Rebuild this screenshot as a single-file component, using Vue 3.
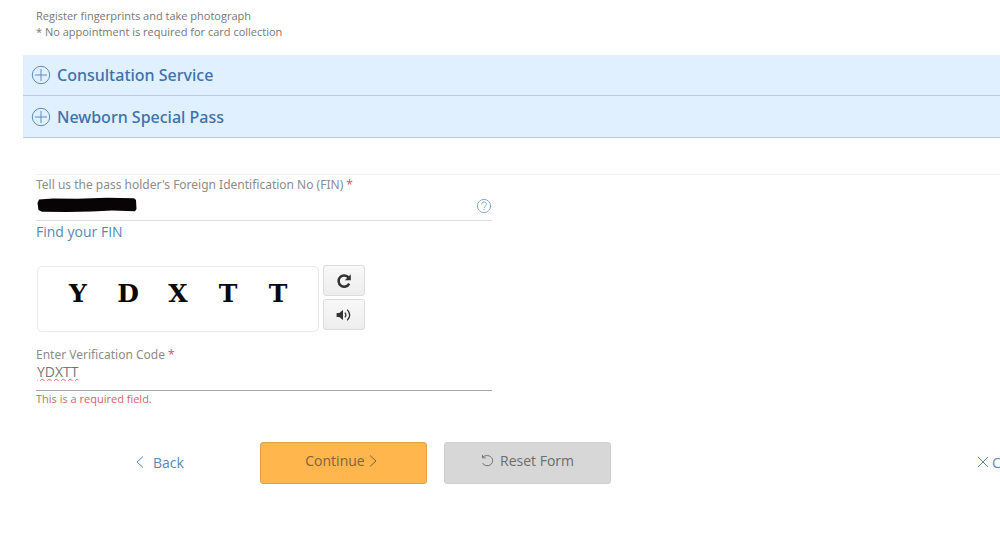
<script setup>
import { ref } from 'vue'

const services = ['Consultation Service', 'Newborn Special Pass']
const captcha = ['Y', 'D', 'X', 'T', 'T']
const fin = ref('')
const code = ref('YDXTT')
</script>

<template>
  <main class="page">
    <p class="notes">
      Register fingerprints and take photograph<br />
      * No appointment is required for card collection
    </p>

    <section class="services">
      <button v-for="name in services" :key="name" type="button" class="service">
        <svg class="plus" viewBox="0 0 20 20" aria-hidden="true">
          <circle cx="10" cy="10" r="8.7" />
          <path d="M10 4v12M4 10h12" />
        </svg>
        {{ name }}
      </button>
    </section>

    <form class="form" @submit.prevent>
      <div class="fields">
        <label class="label" for="fin">Tell us the pass holder's Foreign Identification No (FIN) <span class="star">*</span></label>
        <div class="control light">
          <input id="fin" v-model="fin" class="input" type="text" />
          <svg class="mask" viewBox="0 0 100 16" aria-hidden="true">
            <path d="M2 2.5 16 1.5 40 1.8 70 .8 97 1.2 99 3 99.5 12 98 14.2 75 13.6 55 14.5 30 15 5 14.8 1.5 13 .5 6Z" />
          </svg>
          <button type="button" class="help" aria-label="Help">
            <svg viewBox="0 0 16 16" aria-hidden="true">
              <circle cx="8" cy="8" r="6.6" />
              <path d="M5.6 6.4c0-1.5 1-2.4 2.4-2.4s2.5.9 2.5 2.2c0 1.7-2.3 1.8-2.3 3.6M8.2 11v1.2" />
            </svg>
          </button>
        </div>
        <a class="find" href="#">Find your FIN</a>

        <div class="captcha">
          <div class="challenge">
            <span v-for="(letter, i) in captcha" :key="i">{{ letter }}</span>
          </div>
          <div class="tools">
            <button type="button" class="tool" aria-label="New code">
              <svg viewBox="0 0 16 16" aria-hidden="true">
                <path class="arc" d="M12.6 4.6A5.6 5.6 0 1 0 13.2 10.6" />
                <path class="solid" d="M14.8 1.2v6H8.8Z" />
              </svg>
            </button>
            <button type="button" class="tool" aria-label="Play audio code">
              <svg viewBox="0 0 16 16" aria-hidden="true">
                <path class="solid" d="M.6 6h2.6L7 3v10L3.200 10H.6Z" />
                <path class="wave" d="M8.900 5.700q1.900 2.300 0 4.600M11.200 2.600q5 5.400 0 10.800" />
              </svg>
            </button>
          </div>
        </div>

        <label class="label" for="code">Enter Verification Code <span class="star">*</span></label>
        <div class="control dark">
          <input id="code" v-model="code" class="input flagged" type="text" />
        </div>
        <p class="error">This is a required field.</p>
      </div>

      <div class="actions">
        <a class="link back" href="#">
          <svg viewBox="0 0 10 14" aria-hidden="true"><path d="M8 1.500 2 7l6 5.500" /></svg>
          Back
        </a>
        <button type="submit" class="button continue">
          Continue
          <svg viewBox="0 0 10 14" aria-hidden="true"><path d="M2 1.500 8 7l-6 5.500" /></svg>
        </button>
        <button type="button" class="button reset">
          <svg viewBox="0 0 14 14" aria-hidden="true">
            <path d="M2 3.200C6 .2 12.500 1.800 12.500 7.200c0 6-8.500 7.200-10.700 2.600M1.600 1v3.200H5" />
          </svg>
          Reset Form
        </button>
        <a class="link cancel" href="#">
          <svg viewBox="0 0 12 12" aria-hidden="true"><path d="M1 1l10 10M11 1 1 11" /></svg>
          Cancel
        </a>
      </div>
    </form>
  </main>
</template>

<style>
body {
  margin: 0;
  background: #fff;
  overflow: hidden;
}
</style>

<style scoped>
.page {
  box-sizing: border-box;
  padding: 8px 0 64px 23px;
  font-family: "Open Sans", "Noto Sans", sans-serif;
  color: #777;
  overflow: hidden;
}
button, input {
  font: inherit;
  color: inherit;
}
button {
  cursor: pointer;
}
svg {
  flex: none;
  fill: none;
  stroke: currentColor;
}
.notes {
  margin: 0;
  padding: 0 13px;
  font-size: 11px;
  line-height: 16px;
}
.services {
  margin-top: 15px;
}
.service {
  display: flex;
  align-items: center;
  gap: 6px;
  box-sizing: border-box;
  width: 100%;
  height: 41px;
  padding: 0 8px;
  border: 0;
  border-bottom: 1px solid #bccddd;
  background: #e0f0fe;
  color: #3d72aa;
  font-family: "Noto Sans", sans-serif;
  font-size: 16px;
  font-weight: 500;
  text-align: left;
}
.service:last-child {
  height: 42px;
}
.plus {
  width: 20px;
  height: 20px;
  stroke: #5e8cbb;
}
.form {
  margin: 36px 0 0 13px;
  border-top: 1px solid #f0f0f0;
}
.fields {
  max-width: 456px;
}
.label {
  display: block;
  font-family: "Noto Sans", sans-serif;
  font-size: 12px;
  line-height: 20px;
  color: #8c8c8c;
}
.star {
  color: #e0575b;
}
.control {
  position: relative;
  display: flex;
  align-items: center;
  box-sizing: border-box;
  height: 26px;
  padding-bottom: 4px;
  border-bottom: 1px solid #dcdfe8;
}
.control.dark {
  border-color: #a8a8a8;
}
.input {
  flex: 1;
  min-width: 0;
  height: 18px;
  padding: 0 1px;
  margin-bottom: 8px;
  border: 0;
  outline: 0;
  background: transparent;
  font-size: 14px;
  line-height: 18px;
}
.flagged {
  text-decoration: underline wavy #ee6666 1px;
}
.mask {
  position: absolute;
  left: 1px;
  top: 2px;
  width: 100px;
  height: 16px;
  fill: #080405;
  stroke: none;
}
.help {
  display: flex;
  padding: 0;
  border: 0;
  background: none;
  color: #88a9ca;
}
.help svg {
  width: 16px;
  height: 16px;
}
.find {
  display: block;
  width: max-content;
  font-size: 14px;
  line-height: 22px;
  color: #5a88b5;
  text-decoration: none;
}
.captcha {
  display: flex;
  gap: 4px;
  margin: 22px 0 13px 1px;
}
.challenge {
  box-sizing: border-box;
  display: flex;
  justify-content: center;
  width: 282px;
  height: 66px;
  margin-top: 1px;
  padding-top: 13px;
  border: 1px solid #e9e9e9;
  border-radius: 5px;
  font: bold 25px/28px "DejaVu Serif", serif;
  color: #090909;
}
.challenge span {
  width: 50px;
  text-align: center;
}
.tools {
  display: flex;
  flex-direction: column;
  gap: 3px;
}
.tool {
  display: flex;
  align-items: center;
  justify-content: center;
  width: 42px;
  height: 31px;
  padding: 0;
  border: 1px solid #dcdcdc;
  border-radius: 3px;
  background: linear-gradient(#f8f8f8, #eee);
  color: #333;
}
.tool svg {
  width: 16px;
  height: 16px;
}
.arc {
  stroke-width: 2.500;
}
.solid {
  fill: currentColor;
  stroke: none;
}
.wave {
  stroke-width: 1.300;
}
.error {
  margin: 0;
  font-size: 11px;
  line-height: 16px;
  color: #d2656b;
}
.actions {
  display: flex;
  align-items: center;
  margin-top: 35px;
  font-size: 14px;
}
.link {
  display: flex;
  flex: none;
  align-items: center;
  padding-bottom: 2px;
  color: #5a88b5;
  text-decoration: none;
}
.back {
  gap: 8px;
  width: 125px;
  padding-left: 99px;
}
.back svg, .continue svg {
  width: 10px;
  height: 14px;
}
.button {
  display: flex;
  flex: none;
  align-items: center;
  justify-content: center;
  width: 167px;
  height: 42px;
  padding: 0 0 5px;
  border: 1px solid #cfcfcf;
  border-radius: 3px;
  color: #6c6c6c;
}
.continue {
  gap: 3px;
  padding-right: 4px;
  border-color: #e3a04a;
  background: #ffb64d;
  color: #80643f;
}
.reset {
  gap: 6px;
  margin-left: 17px;
  background: #d7d7d7;
}
.reset svg {
  width: 13px;
  height: 13px;
}
.cancel {
  gap: 3px;
  width: 23px;
  margin-left: auto;
}
.cancel svg {
  width: 12px;
  height: 12px;
}
</style>
